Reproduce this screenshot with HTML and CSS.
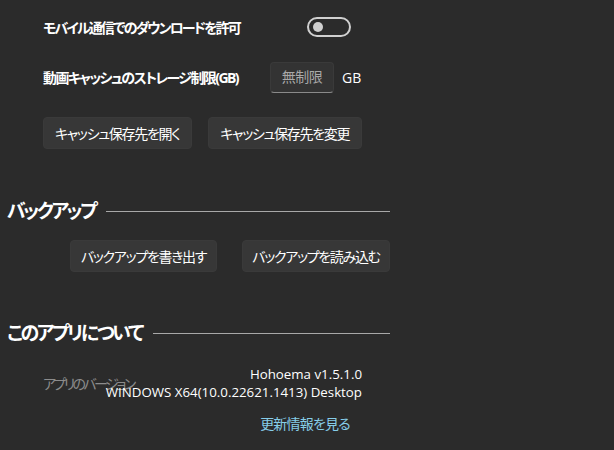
FILE: index.html
```html
<!DOCTYPE html>
<html lang="ja">
<head>
<meta charset="utf-8">
<link rel="stylesheet" href="styles.css">
</head>
<body>
<div class="page">
  <div class="group">
    <div class="row row-toggle">
      <span class="label">モバイル通信でのダウンロードを許可</span>
      <span class="toggle"><span class="knob"></span></span>
    </div>
    <div class="row row-storage">
      <span class="label label-storage">動画キャッシュのストレージ制限(GB)</span>
      <span class="textbox">無制限</span>
      <span class="unit">GB</span>
    </div>
    <div class="row row-buttons">
      <button class="btn btn-open">キャッシュ保存先を開く</button>
      <button class="btn btn-change">キャッシュ保存先を変更</button>
    </div>
  </div>

  <div class="heading heading-backup">
    <h2>バックアップ</h2>
    <span class="rule"></span>
  </div>
  <div class="backup-buttons">
    <button class="btn">バックアップを書き出す</button>
    <button class="btn">バックアップを読み込む</button>
  </div>

  <div class="heading heading-about">
    <h2>このアプリについて</h2>
    <span class="rule"></span>
  </div>
  <div class="about">
    <div class="version">
      <span class="ver-label">アプリのバージョン</span>
      <div class="ver-value">
        <div>Hohoema v1.5.1.0</div>
        <div>WINDOWS X64(10.0.22621.1413) Desktop</div>
      </div>
    </div>
    <div class="link-row">
      <a class="link">更新情報を見る</a>
    </div>
  </div>
</div>
</body>
</html>
```

FILE: styles.css
```css
html, body {
  margin: 0;
  padding: 0;
  background: #2b2b2b;
}
body {
  color: #ffffff;
  font-family: "Open Sans", "Noto Sans CJK JP", sans-serif;
  font-size: 14px;
  font-feature-settings: "palt";
  width: 614px;
  height: 450px;
  overflow: hidden;
}
.page {
  width: 383px;
  padding-left: 7px;
}
.group {
  padding-left: 36px;
  width: 319px;
}
.row {
  display: flex;
  align-items: center;
}
.label {
  font-weight: 700;
  letter-spacing: -1.9px;
  white-space: nowrap;
}
.row-toggle {
  height: 54px;
}
.row-toggle .label {
  width: 264px;
}
.toggle {
  width: 36px;
  height: 16px;
  border: 2px solid #d0d0d0;
  border-radius: 11px;
  display: flex;
  align-items: center;
  padding-left: 4px;
  box-sizing: content-box;
}
.knob {
  width: 10px;
  height: 10px;
  border-radius: 50%;
  background: #d0d0d0;
}
.row-storage {
  height: 46px;
}
.label-storage {
  width: 227px;
  letter-spacing: -1.6px;
}
.textbox {
  width: 64px;
  height: 31px;
  box-sizing: border-box;
  background: #333333;
  border: 1px solid #3a3a3a;
  border-bottom-color: #8a8a8a;
  border-radius: 4px;
  color: #a8a8a8;
  display: flex;
  align-items: center;
  justify-content: center;
  padding-bottom: 2px;
  letter-spacing: -0.5px;
}
.unit {
  margin-left: 8px;
  font-size: 14px;
}
.row-buttons {
  margin-top: 17px;
  gap: 16px;
}
.btn {
  font: inherit;
  color: #ffffff;
  background: #373737;
  border: 1px solid #3a3a3a;
  border-radius: 4px;
  height: 32px;
  padding: 0;
  margin: 0;
  display: flex;
  align-items: center;
  justify-content: center;
  white-space: nowrap;
  letter-spacing: -1.3px;
}
.btn-open {
  width: 149px;
}
.btn-change {
  width: 155px;
}
.heading {
  display: flex;
  align-items: center;
  height: 28px;
}
.heading h2 {
  margin: 0;
  font-size: 19px;
  font-weight: 700;
  line-height: 28px;
  letter-spacing: -2.5px;
}
.rule {
  flex: 1;
  height: 1px;
  background: #a8a8a8;
  margin-left: 11px;
}
.heading-backup {
  margin-top: 48px;
}
.backup-buttons {
  display: flex;
  justify-content: flex-end;
  gap: 25px;
  margin-top: 15px;
}
.backup-buttons .btn {
  width: 147px;
}
.backup-buttons .btn:last-child {
  width: 148px;
}
.heading-about {
  margin-top: 47px;
}
.about {
  margin-top: 18px;
  padding-left: 36px;
  width: 319px;
}
.version {
  display: grid;
}
.ver-label,
.ver-value {
  grid-area: 1 / 1;
}
.ver-label {
  align-self: center;
  color: #8c8c8c;
  margin-top: 0;
  letter-spacing: -2.6px;
}
.ver-value {
  justify-self: end;
  text-align: right;
  line-height: 18px;
  font-size: 13.3px;
}
.link-row {
  display: flex;
  justify-content: flex-end;
  padding-right: 12px;
  margin-top: 13px;
}
.link {
  color: #86cde8;
  line-height: 20px;
  letter-spacing: -0.8px;
}
```
